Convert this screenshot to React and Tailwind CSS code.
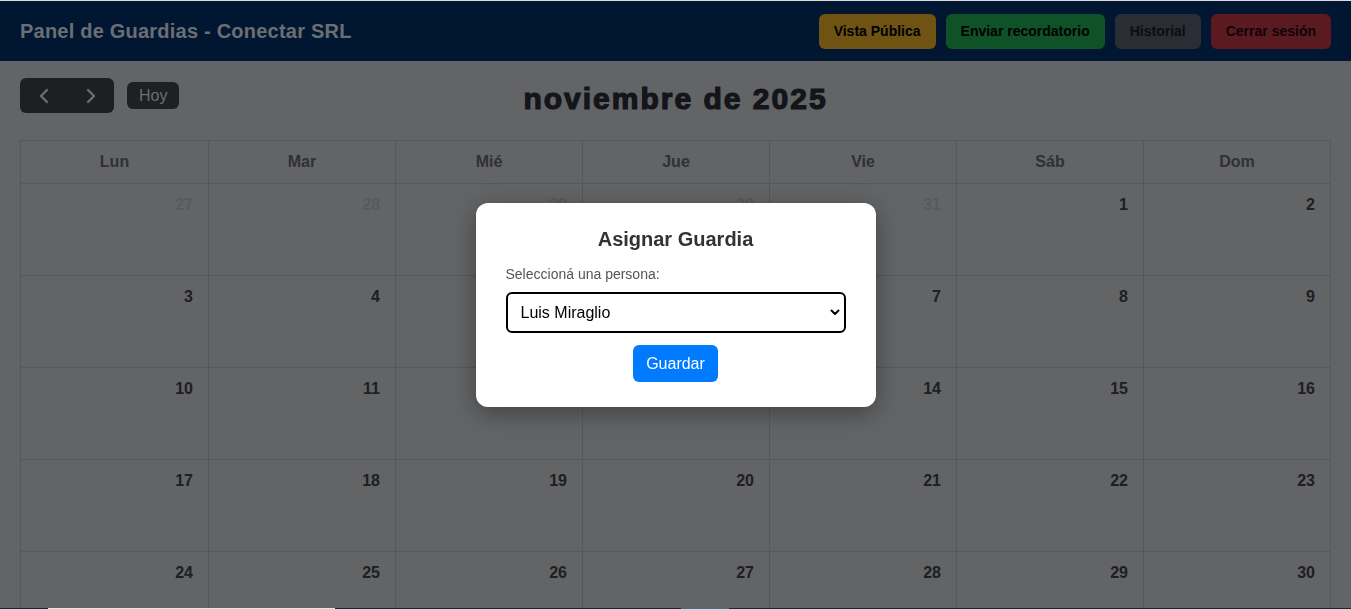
import React from "react";

const days = ["Lun", "Mar", "Mié", "Jue", "Vie", "Sáb", "Dom"];
const weeks = [
  [[27, 0], [28, 0], [29, 0], [30, 0], [31, 0], [1, 1], [2, 1]],
  [[3, 1], [4, 1], [5, 1], [6, 1], [7, 1], [8, 1], [9, 1]],
  [[10, 1], [11, 1], [12, 1], [13, 1], [14, 1], [15, 1], [16, 1]],
  [[17, 1], [18, 1], [19, 1], [20, 1], [21, 1], [22, 1], [23, 1]],
  [[24, 1], [25, 1], [26, 1], [27, 1], [28, 1], [29, 1], [30, 1]],
];

function Chevron({ dir }) {
  return (
    <svg width="24" height="24" viewBox="0 0 24 24" fill="none" stroke="#d4dae4" strokeWidth="2.4" strokeLinecap="round" strokeLinejoin="round">
      {dir === "left" ? <path d="m15 18-6-6 6-6" /> : <path d="m9 18 6-6-6-6" />}
    </svg>
  );
}

export default function App() {
  return (
    <div className="min-h-screen bg-[#c6c8cc] font-['Liberation_Sans',Arial,sans-serif]">
      <div className="h-px bg-[#dcdcdc] relative z-30" />
      <header className="h-[60px] bg-[#002c62] flex items-center justify-between px-5">
        <h1 className="text-[20px] font-bold text-[#d6dce6] tracking-[0.22px]">Panel de Guardias - Conectar SRL</h1>
        <div className="flex gap-[10px]">
          <button className="h-[35px] px-[15px] rounded-md bg-[#dca624] text-black text-sm font-bold">Vista Pública</button>
          <button className="h-[35px] px-[15px] rounded-md bg-[#1ea450] text-black text-sm font-bold">Enviar recordatorio</button>
          <button className="h-[35px] px-[15px] rounded-md bg-[#545a66] text-[#1a1c22] text-sm font-bold">Historial</button>
          <button className="h-[35px] px-[15px] rounded-md bg-[#b4343e] text-[#1a0a0c] text-sm font-bold">Cerrar sesión</button>
        </div>
      </header>

      <main className="px-5 pt-[17px]">
        <div className="relative flex items-center h-[35px] mb-[27px]">
          <div className="flex gap-[13px] items-center">
            <div className="flex rounded-md bg-[#3a3e46] h-[35px]">
              <button className="w-[47px] flex items-center justify-center"><Chevron dir="left" /></button>
              <button className="w-[47px] flex items-center justify-center"><Chevron dir="right" /></button>
            </div>
            <button className="h-[27px] px-[12px] rounded-md bg-[#3c4048] text-[#d4dae4] text-base">Hoy</button>
          </div>
          <h2 className="absolute left-1/2 -translate-x-1/2 top-[-2px] text-[30px] font-bold text-[#262a34] [-webkit-text-stroke:1.2px_#262a34] tracking-[2px] whitespace-nowrap">noviembre de 2025</h2>
        </div>

        <div className="border border-[#aeb0b6]">
          <div className="grid grid-cols-7 h-[42px]">
            {days.map((d, i) => (
              <div key={d} className={`flex items-center justify-center font-bold text-base text-[#5e626a] ${i > 0 ? "border-l border-[#aeb0b6]" : ""}`}>{d}</div>
            ))}
          </div>
          {weeks.map((w, wi) => (
            <div key={wi} className="grid grid-cols-7 h-[92px] border-t border-[#aeb0b6]">
              {w.map(([n, cur], i) => (
                <div key={i} className={`flex justify-end pt-[12px] pr-[15px] ${i > 0 ? "border-l border-[#aeb0b6]" : ""}`}>
                  <span className={`font-bold text-base leading-[18px] ${cur ? "text-[#3a3e46]" : "text-[#b2b5bb]"}`}>{n}</span>
                </div>
              ))}
            </div>
          ))}
        </div>
      </main>

      <div className="fixed inset-0 bg-black/50 z-10" />

      <div className="fixed inset-0 z-20 flex items-start justify-center pt-[203px]">
        <div className="w-[400px] bg-white rounded-xl shadow-[0_6px_24px_rgba(0,0,0,0.35)] px-[30px] pt-[25px] pb-[25px] flex flex-col">
          <h3 className="text-center text-[20px] font-bold text-[#333] leading-[23px]">Asignar Guardia</h3>
          <label className="mt-[15px] text-sm text-[#555] leading-4">Seleccioná una persona:</label>
          <div className="relative mt-[10px]">
            <select className="appearance-none w-full h-[41px] border-2 border-black rounded-md bg-white pl-[13px] text-base text-black outline-none">
              <option>Luis Miraglio</option>
            </select>
            <svg className="absolute right-[6px] top-[17px] pointer-events-none" width="10" height="7" viewBox="0 0 10 7" fill="none" stroke="#000" strokeWidth="2" strokeLinecap="round" strokeLinejoin="round">
              <path d="M1.5 1.5 5 5l3.5-3.5" />
            </svg>
          </div>
          <div className="flex justify-center mt-[12px]">
            <button className="h-[37px] w-[85px] rounded-md bg-[#007bff] text-white text-base">Guardar</button>
          </div>
        </div>
      </div>

      <div className="fixed bottom-0 left-0 right-0 h-px bg-[#0b2d3a] z-30">
        <div className="absolute left-[48px] w-[287px] h-px bg-[#e6e6e6]" />
        <div className="absolute left-[681px] w-[48px] h-px bg-[#1a7f95]" />
      </div>
    </div>
  );
}
